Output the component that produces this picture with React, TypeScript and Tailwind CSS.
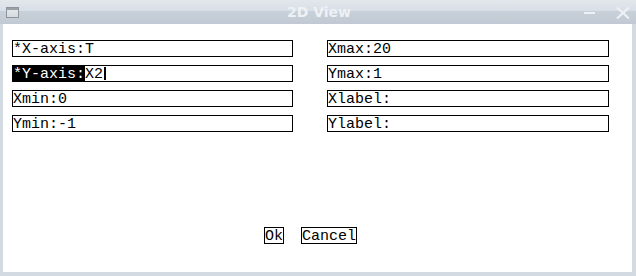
import React from "react";

const mono = "font-['Liberation_Mono',monospace] text-[15px] text-black";

type FieldProps = {
    label: string;
    value: string;
    selected?: boolean;
    cursor?: boolean;
};

const Field = ({ label, value, selected, cursor }: FieldProps) => {
    return (
        <div className={`flex h-[17px] items-start border border-black bg-white ${mono}`}>
            <span className={`h-[15px] whitespace-pre leading-[17px] ${selected ? "bg-black text-white" : ""}`}>
                {label}
            </span>
            <span className="h-[15px] whitespace-pre leading-[17px]">{value}</span>
            {cursor && <span className="ml-[1px] mt-[1px] h-[13px] w-[2px] bg-black" />}
        </div>
    );
};

const left: FieldProps[] = [
    { label: "*X-axis:", value: "T" },
    { label: "*Y-axis:", value: "X2", selected: true, cursor: true },
    { label: "Xmin:", value: "0" },
    { label: "Ymin:", value: "-1" },
];

const right: FieldProps[] = [
    { label: "Xmax:", value: "20" },
    { label: "Ymax:", value: "1" },
    { label: "Xlabel:", value: "" },
    { label: "Ylabel:", value: "" },
];

const Button = ({ title }: { title: string }) => (
    <button className={`flex h-[17px] items-start border border-black bg-white px-0 ${mono}`}>
        <span className="h-[15px] leading-[17px]">{title}</span>
    </button>
);

export default function App() {
    return (
        <div className="flex h-[276px] w-[636px] flex-col bg-[#d3dae2]">
            {/* title bar */}
            <div className="relative flex h-[24px] items-center bg-[linear-gradient(#e2e7ec,#d9dfe6_44%,#c8d0d9_46%,#c1cad4)]">
                <div className="ml-[6px] mt-[1px] h-[11px] w-[13px] border border-[#8d949c] bg-[linear-gradient(#9aa1a9_0,#9aa1a9_2px,#e4e7ea_2px,#d6dade)]" />
                <div className="flex-1 pl-[268px] font-['DejaVu_Sans',sans-serif] text-[14px] font-bold leading-[24px] text-[#eef1f5]">
                    2D View
                </div>
                <div className="mr-[21px] mt-[1px] h-[2px] w-[11px] bg-[#eef1f5]" />
                <svg width="14" height="12" viewBox="0 0 14 12" className="mr-[6px] mt-[1px]">
                    <path d="M1 0.5 L13 11.5 M13 0.5 L1 11.5" stroke="#eef1f5" strokeWidth="2.2" />
                </svg>
            </div>

            {/* body */}
            <div className="mb-[4px] ml-[3px] mr-[4px] flex flex-1 flex-col bg-white">
                <div className="flex gap-[34px] pl-[9px] pr-[23px] pt-[16px]">
                    <div className="flex w-[281px] flex-col gap-[8px]">
                        {left.map((f) => (
                            <Field key={f.label} {...f} />
                        ))}
                    </div>
                    <div className="flex w-[282px] flex-col gap-[8px]">
                        {right.map((f) => (
                            <Field key={f.label} {...f} />
                        ))}
                    </div>
                </div>

                <div className="mt-[95px] flex gap-[17px] pl-[261px]">
                    <Button title="Ok" />
                    <Button title="Cancel" />
                </div>
            </div>
        </div>
    );
}
